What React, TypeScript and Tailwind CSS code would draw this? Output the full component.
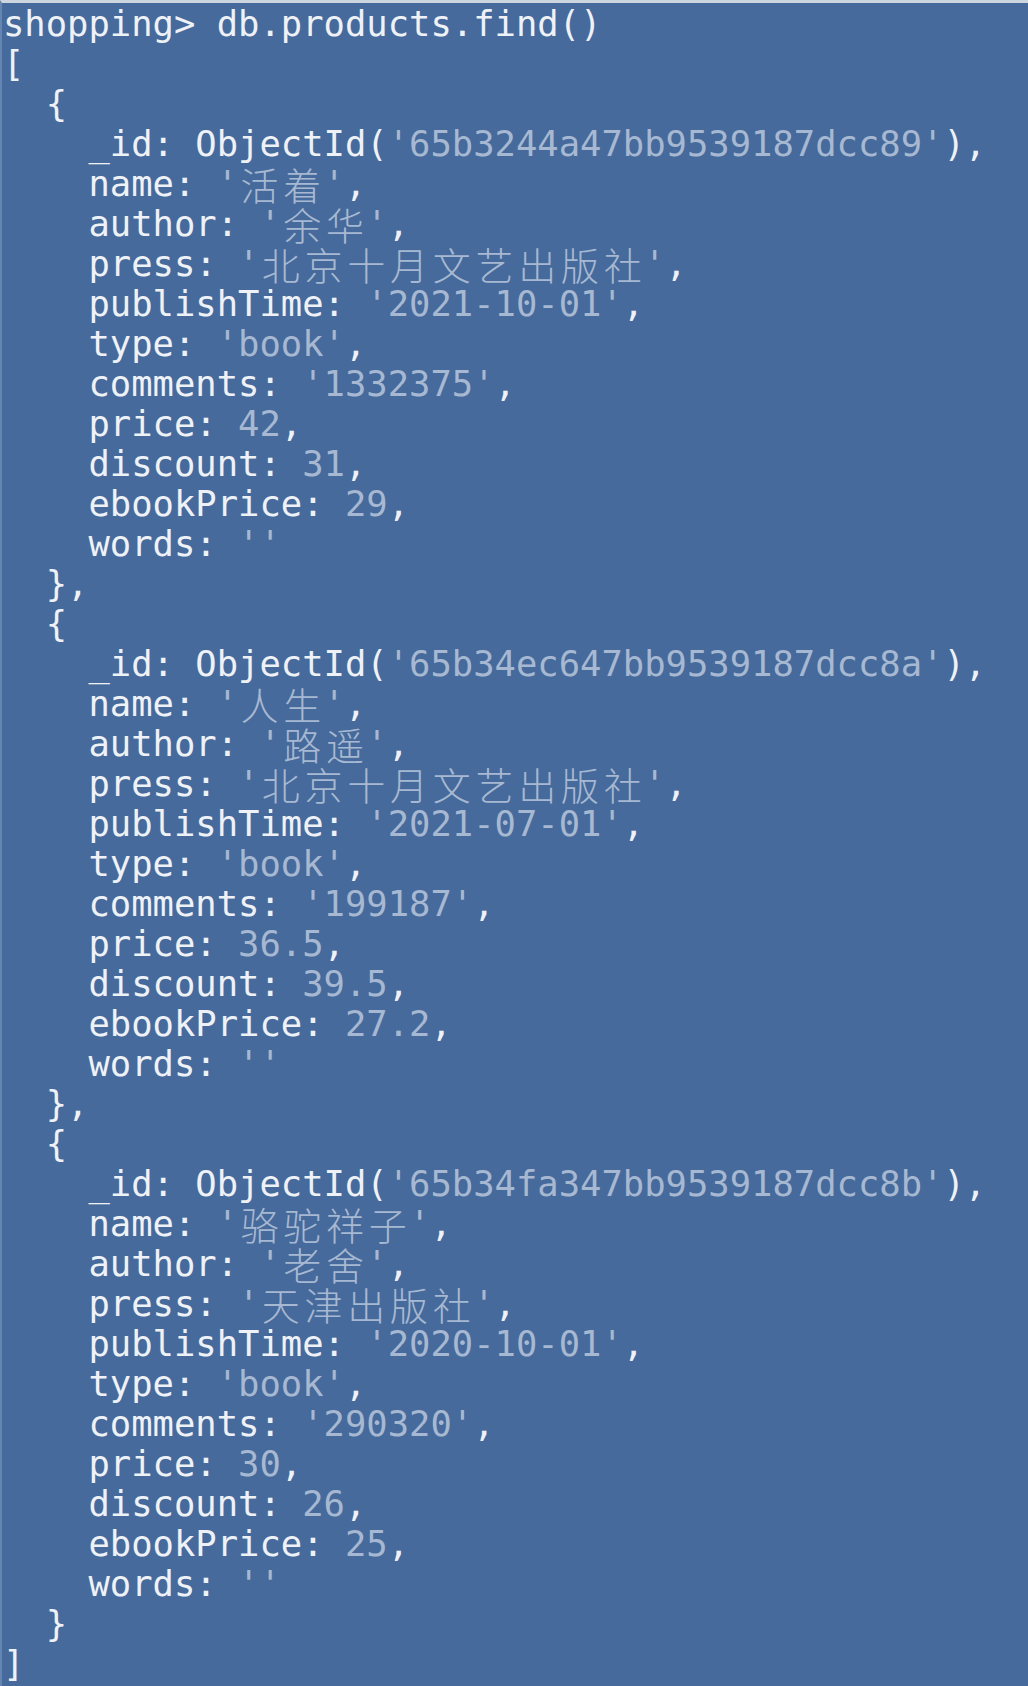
type Seg = [string, boolean]; // [text, muted]

type Book = {
  id: string;
  name: string;
  author: string;
  press: string;
  publishTime: string;
  comments: string;
  price: string;
  discount: string;
  ebookPrice: string;
};

const books: Book[] = [
  {
    id: "65b3244a47bb9539187dcc89",
    name: "活着",
    author: "余华",
    press: "北京十月文艺出版社",
    publishTime: "2021-10-01",
    comments: "1332375",
    price: "42",
    discount: "31",
    ebookPrice: "29",
  },
  {
    id: "65b34ec647bb9539187dcc8a",
    name: "人生",
    author: "路遥",
    press: "北京十月文艺出版社",
    publishTime: "2021-07-01",
    comments: "199187",
    price: "36.5",
    discount: "39.5",
    ebookPrice: "27.2",
  },
  {
    id: "65b34fa347bb9539187dcc8b",
    name: "骆驼祥子",
    author: "老舍",
    press: "天津出版社",
    publishTime: "2020-10-01",
    comments: "290320",
    price: "30",
    discount: "26",
    ebookPrice: "25",
  },
];

const str = (key: string, val: string): Seg[] => [
  [`    ${key}: `, false],
  [`'${val}'`, true],
  [",", false],
];

const num = (key: string, val: string): Seg[] => [
  [`    ${key}: `, false],
  [val, true],
  [",", false],
];

function buildLines(): Seg[][] {
  const lines: Seg[][] = [[["shopping> db.products.find()", false]], [["[", false]]];
  books.forEach((b, i) => {
    lines.push([["  {", false]]);
    lines.push([
      ["    _id: ObjectId(", false],
      [`'${b.id}'`, true],
      ["),", false],
    ]);
    lines.push(str("name", b.name));
    lines.push(str("author", b.author));
    lines.push(str("press", b.press));
    lines.push(str("publishTime", b.publishTime));
    lines.push(str("type", "book"));
    lines.push(str("comments", b.comments));
    lines.push(num("price", b.price));
    lines.push(num("discount", b.discount));
    lines.push(num("ebookPrice", b.ebookPrice));
    lines.push([
      ["    words: ", false],
      ["''", true],
    ]);
    lines.push([[i < books.length - 1 ? "  }," : "  }", false]]);
  });
  lines.push([["]", false]]);
  return lines;
}

const isCjk = (ch: string) => /[\u3400-\u9fff]/.test(ch);

// CJK glyphs take two terminal cells
function Text({ text }: { text: string }) {
  const parts: string[] = [];
  let buf = "";
  for (const ch of text) {
    if (isCjk(ch)) {
      if (buf) parts.push(buf);
      buf = "";
      parts.push(ch);
    } else {
      buf += ch;
    }
  }
  if (buf) parts.push(buf);

  return (
    <>
      {parts.map((p, i) =>
        isCjk(p) ? (
          <span
            key={i}
            className="inline-block w-[42.74px] text-center align-top text-[38px] leading-[40px] font-['Noto_Sans_CJK_SC',sans-serif] font-light"
          >
            {p}
          </span>
        ) : (
          <span key={i}>{p}</span>
        )
      )}
    </>
  );
}

export default function App() {
  const lines = buildLines();

  return (
    <div className="w-full h-[1686px] bg-[#466a9b] border-t-[3px] border-t-[#cdd5de] border-l-2 border-l-[#6585b2] pt-px pl-px font-['DejaVu_Sans_Mono',monospace] text-[35.5px] leading-[40px] text-[#eef2f7]">
      {lines.map((line, i) => (
        <div key={i} className="h-[40px] whitespace-pre">
          {line.map(([t, muted], j) => (
            <span key={j} className={muted ? "text-[#a7b9d2]" : ""}>
              <Text text={t} />
            </span>
          ))}
        </div>
      ))}
    </div>
  );
}
